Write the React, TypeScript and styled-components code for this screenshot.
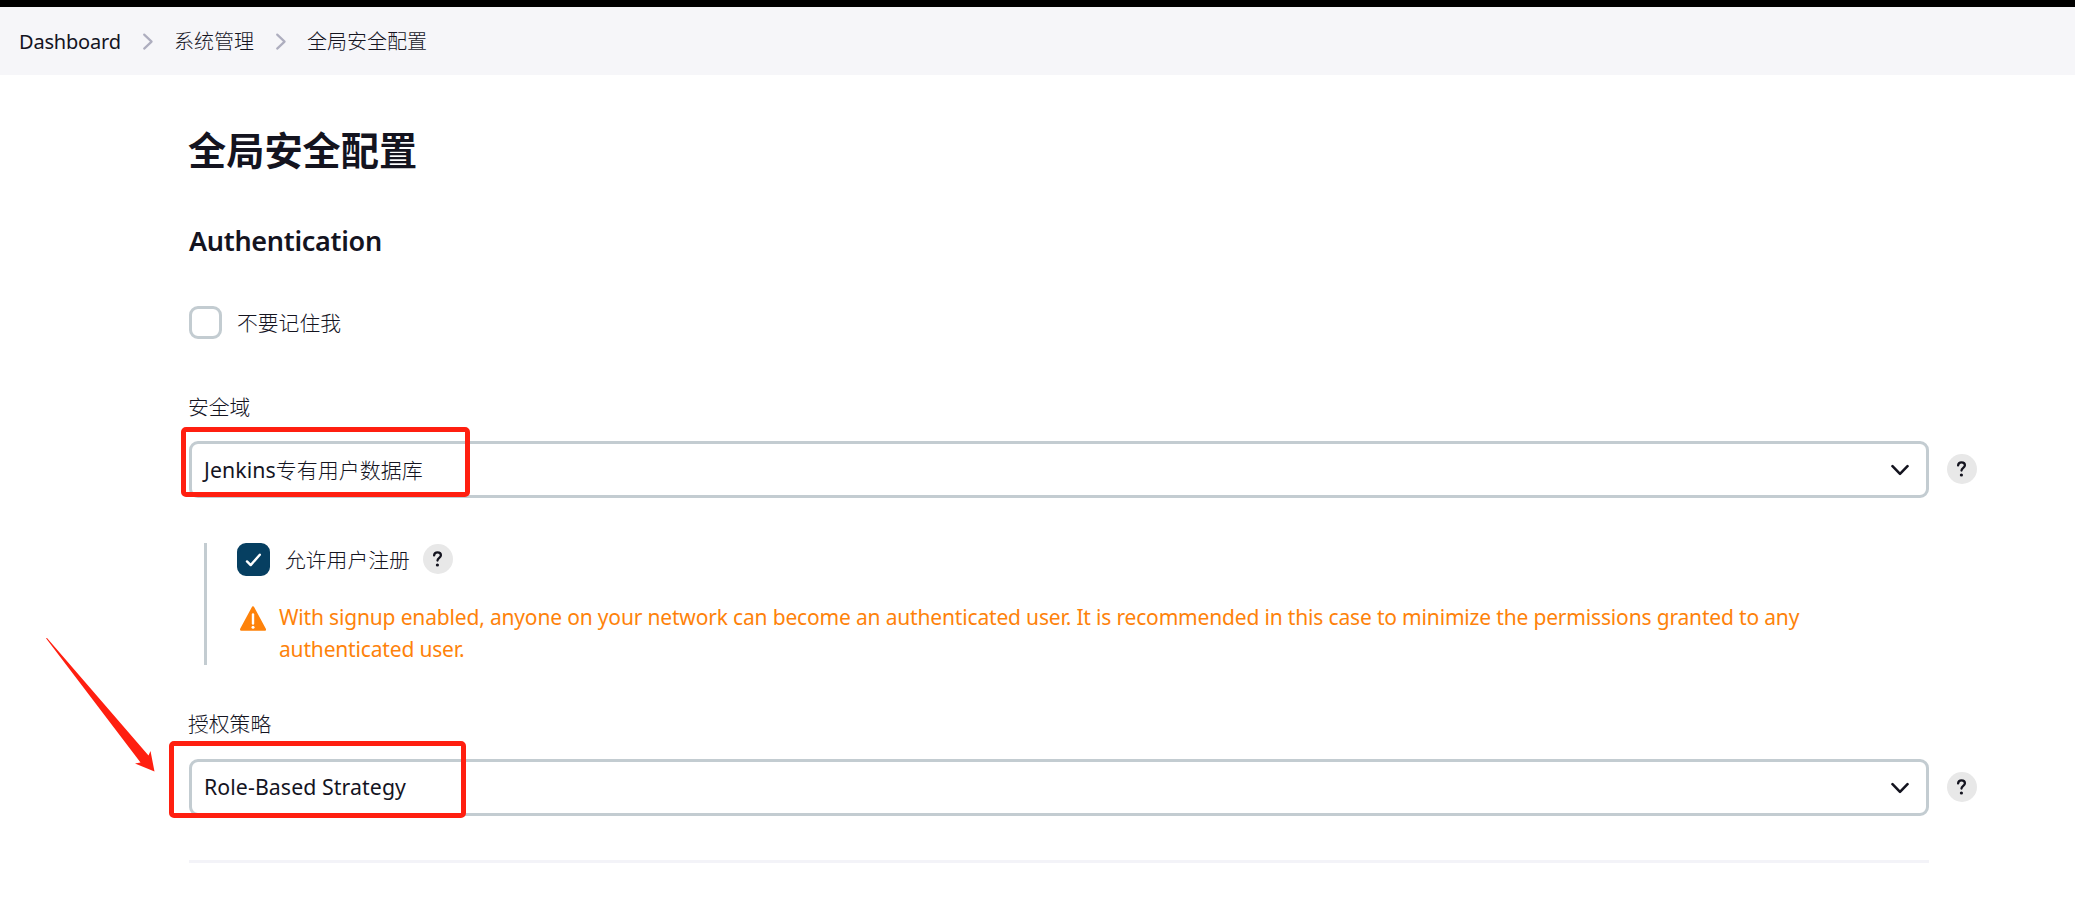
import React from "react";
import styled, { createGlobalStyle } from "styled-components";

const GlobalStyle = createGlobalStyle`
  *, *::before, *::after { box-sizing: border-box; }
  body {
    margin: 0;
    background: #fff;
    color: #14141f;
    font-family: "Noto Sans", "Noto Sans CJK SC", sans-serif;
    font-size: 20.8px;
  }
`;

const Page = styled.div`
  height: 905px;
  border-top: 7px solid #000;
  overflow: hidden;
`;

const Breadcrumbs = styled.nav`
  display: flex;
  align-items: center;
  height: 68px;
  padding: 2px 19px 0;
  background: #f6f6f9;
  font-size: 20px;
`;

const Crumb = styled.span<{ $width: number; $weight?: number; $spacing?: number }>`
  width: ${(p) => p.$width}px;
  line-height: 30px;
  white-space: nowrap;
  font-weight: ${(p) => p.$weight ?? 300};
  letter-spacing: ${(p) => p.$spacing ?? 0}px;
`;

const CrumbArrow = styled.svg`
  width: 12px;
  height: 18px;
  margin: 0 20px 0 21px;
  flex: none;
`;

const Main = styled.main`
  width: 1788px;
  margin-left: 189px;
`;

const Title = styled.h1`
  margin: 0 0 0 -1px;
  padding-top: 47px;
  height: 132px;
  font-size: 38.2px;
  line-height: 56px;
  font-weight: 700;
`;

const SectionTitle = styled.h2`
  margin: 0;
  height: 99px;
  padding-top: 17px;
  font-size: 27px;
  line-height: 34px;
  font-weight: 600;
  letter-spacing: -0.3px;
`;

const CheckRow = styled.div`
  display: flex;
  align-items: center;
  height: 33px;
`;

const Box = styled.span<{ $checked?: boolean }>`
  display: grid;
  place-items: center;
  width: 33px;
  height: 33px;
  margin-right: 15px;
  border: 3px solid ${(p) => (p.$checked ? "#063f61" : "#c3ccd1")};
  border-radius: 9px;
  background: ${(p) => (p.$checked ? "#063f61" : "#fff")};
`;

const CheckLabel = styled.label`
  margin-right: 13px;
  padding-bottom: 2px;
  font-weight: 300;
`;

const Field = styled.section<{ $top: number }>`
  margin-top: ${(p) => p.$top}px;
`;

const FieldLabel = styled.div<{ $lineHeight: number }>`
  height: 46px;
  margin-left: -1px;
  line-height: ${(p) => p.$lineHeight}px;
  font-weight: 300;
`;

const FieldRow = styled.div`
  position: relative;
  display: flex;
  align-items: center;
  gap: 18px;
`;

const Select = styled.button`
  display: flex;
  align-items: center;
  justify-content: space-between;
  width: 1740px;
  height: 57px;
  padding: 0 17px 0 12px;
  border: 3px solid #c3ccd1;
  border-radius: 9px;
  background: #fff;
  color: inherit;
  font: inherit;
`;

const SelectText = styled.span`
  padding-bottom: 2px;
  font-size: 21.3px;
  letter-spacing: 0.08px;
`;

const Hanzi = styled.span`
  font-size: 21px;
  font-weight: 300;
  letter-spacing: 0;
`;

const HelpCircle = styled.span`
  display: grid;
  place-items: center;
  width: 30px;
  height: 30px;
  margin-bottom: 1px;
  flex: none;
  border-radius: 50%;
  background: #e8e8e8;
`;

const Nested = styled.div`
  display: flex;
  flex-direction: column;
  height: 122px;
  margin: 45px 0 0 15px;
  padding-left: 30px;
  border-left: 3px solid #c3ccd1;
`;

const Warning = styled.div`
  display: flex;
  margin-top: 25px;
  color: #fe820a;
  line-height: 32px;
`;

const WarningText = styled.p`
  margin: 0 0 0 13px;
  font-size: 21px;
  letter-spacing: -0.17px;
  white-space: nowrap;
`;

const WarningIcon = styled.svg`
  width: 26px;
  height: 26px;
  margin: 5px 0 0 3px;
  flex: none;
`;

const Divider = styled.hr`
  width: 1740px;
  height: 3px;
  margin: 44px 0 0;
  border: 0;
  background: #f3f3f8;
`;

const Highlight = styled.div<{ $left: number; $top: number; $width: number; $height: number }>`
  position: absolute;
  left: ${(p) => p.$left}px;
  top: ${(p) => p.$top}px;
  width: ${(p) => p.$width}px;
  height: ${(p) => p.$height}px;
  border: 5px solid #ff1f10;
  border-radius: 5px;
`;

const Arrow = styled.svg`
  position: absolute;
  left: -144px;
  top: -123px;
  width: 112px;
  height: 138px;
`;

const Separator = () => (
  <CrumbArrow viewBox="0 0 12 18" fill="none" stroke="#aeaebf" strokeWidth="2.2" strokeLinecap="round" strokeLinejoin="round">
    <path d="M2.2 1.6L9.6 8.6L2.2 15.6" />
  </CrumbArrow>
);

const Help = () => (
  <HelpCircle>
    <svg width="30" height="30" viewBox="0 0 30 30" fill="none" stroke="#14141f" strokeWidth="2.3" strokeLinecap="round">
      <path d="M11.1 11.4C11.3 9.4 12.6 8.4 14.5 8.4c2 0 3.4 1.1 3.4 2.9 0 2.5-3.4 2.7-3.4 5.3" />
      <circle cx="14.4" cy="21" r="1.6" fill="#14141f" stroke="none" />
    </svg>
  </HelpCircle>
);

const Chevron = () => (
  <svg width="18" height="12" viewBox="0 0 18 12" fill="none" stroke="#14141f" strokeWidth="2.6" strokeLinecap="round" strokeLinejoin="round">
    <path d="M1.5 2.2L9 9.8l7.5-7.6" />
  </svg>
);

export default function App() {
  return (
    <>
      <GlobalStyle />
      <Page>
        <Breadcrumbs>
          <Crumb $width={102} $weight={400} $spacing={-0.2}>Dashboard</Crumb>
          <Separator />
          <Crumb $width={80}>系统管理</Crumb>
          <Separator />
          <Crumb $width={120}>全局安全配置</Crumb>
        </Breadcrumbs>
        <Main>
          <Title>全局安全配置</Title>
          <SectionTitle>Authentication</SectionTitle>
          <CheckRow>
            <Box />
            <CheckLabel>不要记住我</CheckLabel>
          </CheckRow>
          <Field $top={56}>
            <FieldLabel $lineHeight={25}>安全域</FieldLabel>
            <FieldRow>
              <Select>
                <SelectText>
                  Jenkins<Hanzi>专有用户数据库</Hanzi>
                </SelectText>
                <Chevron />
              </Select>
              <Help />
              <Highlight $left={-8} $top={-14} $width={289} $height={70} />
            </FieldRow>
          </Field>
          <Nested>
            <CheckRow>
              <Box $checked>
                <svg width="17" height="14" viewBox="0 0 17 14" fill="none" stroke="#fff" strokeWidth="2.4" strokeLinecap="round" strokeLinejoin="round">
                  <path d="M2 8.4l3.7 3.7L14.8 1.7" />
                </svg>
              </Box>
              <CheckLabel>允许用户注册</CheckLabel>
              <Help />
            </CheckRow>
            <Warning>
              <WarningIcon viewBox="0 0 26 26">
                <path d="M13 1.8L24.6 23.4H1.4z" fill="#fe820a" stroke="#fe820a" strokeWidth="2.8" strokeLinejoin="round" />
                <path d="M13 8.5v9" stroke="#fff" strokeWidth="2.4" strokeLinecap="round" />
                <circle cx="13" cy="21.3" r="1.5" fill="#fff" />
              </WarningIcon>
              <WarningText>
                With signup enabled, anyone on your network can become an authenticated user. It is recommended in this case to minimize the permissions granted to any
                <br />
                authenticated user.
              </WarningText>
            </Warning>
          </Nested>
          <Field $top={48}>
            <FieldLabel $lineHeight={23}>授权策略</FieldLabel>
            <FieldRow>
              <Select>
                <SelectText>Role-Based Strategy</SelectText>
                <Chevron />
              </Select>
              <Help />
              <Highlight $left={-20} $top={-18} $width={297} $height={77} />
              <Arrow viewBox="0 0 112 138" fill="#ff1f10">
                <path d="M1 2.2L2 2L103.5 119.5L105.5 115L109.5 135.5L90 127.5L95.5 126.5z" />
              </Arrow>
            </FieldRow>
          </Field>
          <Divider />
        </Main>
      </Page>
    </>
  );
}
